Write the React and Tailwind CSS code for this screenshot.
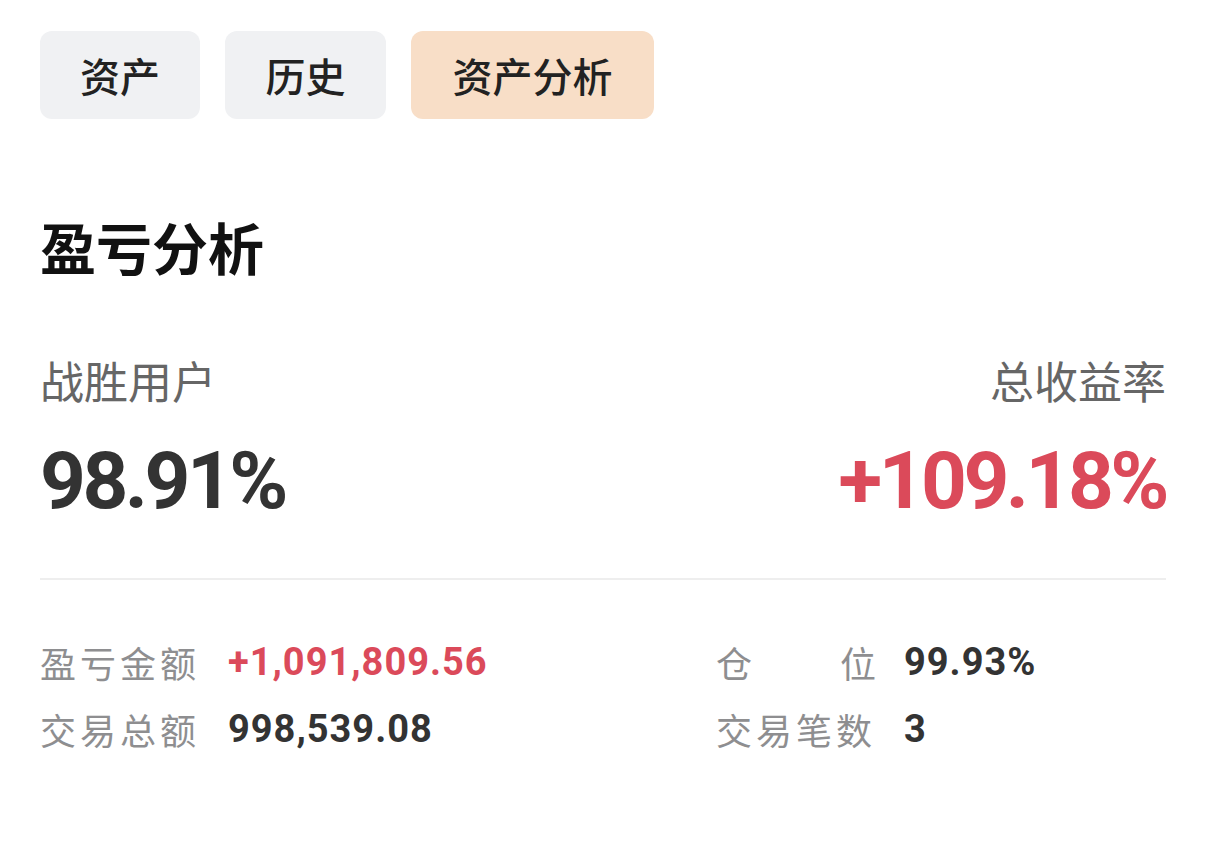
import { useState } from "react";

const tabs = [
  { label: "资产", w: "w-[160px]" },
  { label: "历史", w: "w-[161px]" },
  { label: "资产分析", w: "w-[243px]" },
];

const cjk = "font-['Noto_Sans_CJK_SC',sans-serif]";
const num = "font-['Roboto','Noto_Sans_CJK_SC',sans-serif]";

function StatRow({ label, value, red, spread }) {
  return (
    <div className="flex items-center h-[67px]">
      <span
        className={`w-[160px] text-[36px] leading-none text-[#8e8e90] ${cjk} ${
          spread ? "flex justify-between" : "tracking-[4px]"
        }`}
      >
        {spread ? label.split("").map((c) => <span key={c}>{c}</span>) : label}
      </span>
      <span
        className={`ml-[28px] text-[38px] leading-none font-bold tracking-[1px] ${num} ${
          red ? "text-[#db4a5a]" : "text-[#333333]"
        }`}
      >
        {value}
      </span>
    </div>
  );
}

export default function App() {
  const [active, setActive] = useState(2);

  return (
    <div className={`min-h-[862px] bg-white px-[40px] pt-[31px] ${cjk}`}>
      <div className="flex gap-[25px]">
        {tabs.map((t, i) => (
          <button
            key={t.label}
            onClick={() => setActive(i)}
            className={`${t.w} h-[88px] rounded-[12px] text-[40px] font-medium text-[#222222] ${
              active === i ? "bg-[#f8dec7]" : "bg-[#f0f1f3]"
            }`}
          >
            {t.label}
          </button>
        ))}
      </div>

      <h2 className="mt-[99px] text-[56px] font-bold leading-none text-[#111111]">
        盈亏分析
      </h2>

      <div className="mt-[84px] flex justify-between">
        <div>
          <div className="text-[44px] leading-none text-[#666666]">战胜用户</div>
          <div
            className={`mt-[39px] text-[80px] font-bold leading-none tracking-[-3.5px] text-[#333333] ${num}`}
          >
            98.91%
          </div>
        </div>
        <div className="text-right">
          <div className="text-[44px] leading-none text-[#666666]">总收益率</div>
          <div
            className={`mt-[39px] text-[80px] font-bold leading-none tracking-[-3.5px] text-[#db4a5a] ${num}`}
          >
            +109.18%
          </div>
        </div>
      </div>

      <div className="mt-[57px] h-[2px] bg-[#eeeeee]" />

      <div className="mt-[48px] flex">
        <div className="w-[676px]">
          <StatRow label="盈亏金额" value="+1,091,809.56" red />
          <StatRow label="交易总额" value="998,539.08" />
        </div>
        <div>
          <StatRow label="仓位" value="99.93%" spread />
          <StatRow label="交易笔数" value="3" />
        </div>
      </div>
    </div>
  );
}
